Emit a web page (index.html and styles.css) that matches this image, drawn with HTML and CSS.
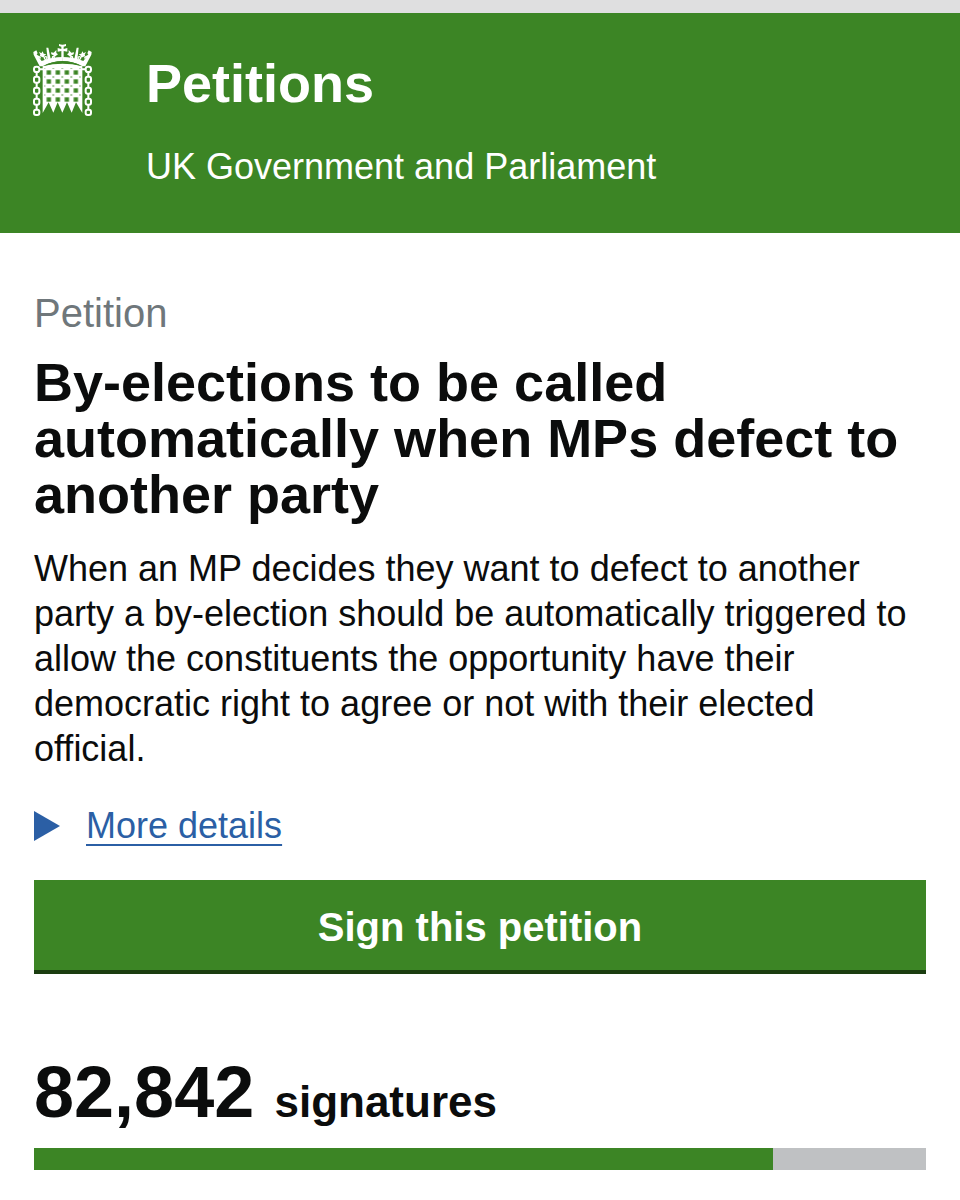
FILE: index.html
```html
<!DOCTYPE html>
<html lang="en">
<head>
    <meta charset="UTF-8">
    <meta name="viewport" content="width=device-width, initial-scale=1">
    <title>By-elections to be called automatically when MPs defect to another party - Petitions</title>
    <link rel="stylesheet" href="styles.css">
</head>
<body>
    <header class="site-header">
        <svg class="portcullis" viewBox="40 40 177 219" aria-hidden="true">
            <defs>
                <pattern id="holes" x="74" y="115" width="27" height="27" patternUnits="userSpaceOnUse">
                    <rect x="7" y="7" width="13" height="13" />
                    <rect x="0" y="0" width="2" height="2" />
                    <rect x="25" y="0" width="2" height="2" />
                    <rect x="0" y="25" width="2" height="2" />
                    <rect x="25" y="25" width="2" height="2" />
                </pattern>
                <!-- left half, mirrored for the right -->
                <g id="half">
                    <path fill="#fff" d="M41 67l9-5 4 9-3 3 15 20q30-12 63-12v13q-34 0-60 15h-9L42 75z" />
                    <path fill="#fff" d="M80 54h6l7 34h-9z" />
                    <path fill="#fff" d="M58 66l7 5 4-6 3 7 8 2-6 4-2 6-6-3-6-1 2-5z" />
                    <path fill="#fff" d="M94 68l8 1 8-8v9l5 4-6 4-4 4-4-5-6-3z" />
                    <g fill="none" stroke="#fff" stroke-width="4">
                        <path d="M52 79q7 0 11 7" />
                        <circle cx="78" cy="85" r="4" />
                        <circle cx="101" cy="83" r="3" />
                    </g>
                    <!-- chain -->
                    <g fill="none" stroke="#fff" stroke-width="6">
                        <rect x="43" y="111" width="16" height="16" rx="7" />
                        <rect x="43" y="141" width="16" height="18" rx="6" />
                        <rect x="43" y="174" width="16" height="18" rx="6" />
                        <rect x="43" y="207" width="16" height="18" rx="6" />
                        <rect x="43" y="240" width="16" height="16" rx="6" />
                        <path d="M51 127v14M51 159v15M51 192v15M51 225v15M59 119h12" />
                    </g>
                </g>
            </defs>
            <use href="#half" />
            <use href="#half" transform="matrix(-1 0 0 1 257 0)" />
            <path fill="#fff" d="M118 43q10 4 21 0v6l-7 2v7l11-3v11l-11-2v20h-7V64l-11 2V55l11 3v-7l-7-2z" />
            <!-- gate -->
            <path fill="#fff" d="M69 110q59-20 119 0v140l-19-32-13 31-14-31-14 31-14-31-13 31-14-31-18 32z" />
            <path fill="url(#holes)" d="M74 115h109v104H74z" />
            <path class="sliver" d="M71 109q57-30 115 0-57-14-115 0z" />
        </svg>
        <div class="site-name">
            <a class="site-title" href="/">Petitions</a>
            <span class="site-owner">UK Government and Parliament</span>
        </div>
    </header>

    <main class="petition">
        <p class="petition-label">Petition</p>
        <h1>By-elections to be called automatically when MPs defect to another party</h1>
        <p class="petition-text">When an MP decides they want to defect to another party a by-election should be automatically triggered to allow the constituents the opportunity have their democratic right to agree or not with their elected official.</p>

        <details class="more">
            <summary><span class="more-label">More details</span></summary>
        </details>

        <button class="sign-button" type="button">Sign this petition</button>

        <p class="signature-count"><span class="count">82,842</span> signatures</p>
        <div class="graph" role="progressbar" aria-label="Signatures" aria-valuemin="0" aria-valuemax="100000" aria-valuenow="82842">
            <div class="graph-bar" style="width: 82.842%"></div>
        </div>
    </main>
</body>
</html>
```
FILE: styles.css
```css
body {
    margin: 0;
    border-top: 13px solid #dfdfe0;
    background-color: #fff;
    color: #0b0c0c;
    font-family: "Helvetica Neue", "Liberation Sans", Arial, sans-serif;
    font-size: 36px;
    line-height: 45px;
}

p, h1 {
    margin: 0;
}

/* Header */
.site-header {
    display: flex;
    align-items: flex-start;
    gap: 54px;
    padding: 30px 33px 44px;
    background-color: #3c8525;
    color: #fff;
}

.portcullis {
    flex: none;
    width: 59px;
    height: 73px;
}

.portcullis pattern,
.portcullis .sliver {
    fill: #3c8525;
}

.site-name {
    display: flex;
    flex-direction: column;
    gap: 31px;
    padding-top: 10px;
}

.site-title {
    color: #fff;
    font-size: 54px;
    font-weight: bold;
    line-height: 60px;
    text-decoration: none;
}

/* Petition */
.petition {
    padding: 58px 34px 30px;
}

.petition-label {
    color: #6f777b;
    font-size: 40px;
}

h1 {
    margin: 18px 0 24px;
    font-size: 54px;
    line-height: 56px;
}

.more {
    margin: 32px 0;
    color: #2b5fa5;
}

.more summary {
    display: flex;
    align-items: center;
    gap: 26px;
    cursor: pointer;
}

.more summary::before {
    content: "";
    border-style: solid;
    border-width: 15px 0 15px 26px;
    border-color: transparent transparent transparent #2b5fa5;
}

.more-label {
    text-decoration: underline;
    text-decoration-thickness: 2px;
    text-underline-offset: 6px;
    text-decoration-skip-ink: none;
}

.sign-button {
    display: block;
    width: 100%;
    padding: 24px 22px 20px;
    border: 0;
    border-bottom: 4px solid #1b3d10;
    background-color: #3c8525;
    color: #fff;
    font: bold 40px/46px "Helvetica Neue", "Liberation Sans", Arial, sans-serif;
    cursor: pointer;
}

.signature-count {
    margin: 78px 0 6px;
    font-size: 44px;
    font-weight: bold;
    line-height: 80px;
}

.count {
    margin-right: 8px;
    font-size: 72px;
}

.graph {
    height: 22px;
    background-color: #bfc1c3;
}

.graph-bar {
    height: 100%;
    background-color: #3c8525;
}
```
